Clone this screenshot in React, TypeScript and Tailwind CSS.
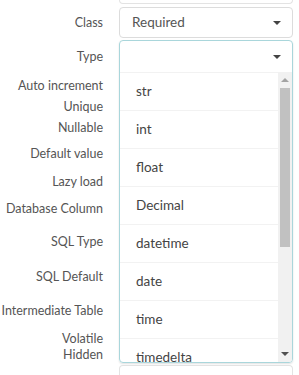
import React from "react";

const labels: { text: string; mt: string }[] = [
  { text: "Class", mt: "mt-[16px]" },
  { text: "Type", mt: "mt-[20px]" },
  { text: "Auto increment", mt: "mt-[15px]" },
  { text: "Unique", mt: "mt-[7px]" },
  { text: "Nullable", mt: "mt-[7px]" },
  { text: "Default value", mt: "mt-[12px]" },
  { text: "Lazy load", mt: "mt-[14px]" },
  { text: "Database Column", mt: "mt-[13px]" },
  { text: "SQL Type", mt: "mt-[19px]" },
  { text: "SQL Default", mt: "mt-[21px]" },
  { text: "Intermediate Table", mt: "mt-[20px]" },
  { text: "Volatile", mt: "mt-[14px]" },
  { text: "Hidden", mt: "mt-[2px]" },
];

const options = ["str", "int", "float", "Decimal", "datetime", "date", "time", "timedelta"];

const Caret = ({ className = "" }: { className?: string }) => (
  <span
    className={`block h-0 w-0 border-x-[4px] border-t-[4px] border-x-transparent border-t-[#444] ${className}`}
  />
);

const App = () => {
  return (
    <div
      className="flex h-[375px] w-[299px] overflow-hidden bg-white text-[#555]"
      style={{ fontFamily: 'Lato, "Liberation Sans", sans-serif' }}
    >
      <div className="flex w-[103px] shrink-0 flex-col items-end text-[12.5px] leading-[14px]">
        {labels.map((l) => (
          <div key={l.text} className={`${l.mt} whitespace-nowrap`}>
            {l.text}
          </div>
        ))}
      </div>

      <div className="ml-[16px] flex w-[174px] shrink-0 flex-col">
        <div className="h-[4px] rounded-b-[4px] border-x border-b border-[#e3e3e3]" />

        <div className="mt-[3px] flex h-[32px] items-center justify-between rounded-[4px] border border-[#dcdcdc] pl-[12px] pr-[11px] text-[13.5px]">
          <span>Required</span>
          <Caret />
        </div>

        <div className="mt-[2px] flex h-[332px] flex-col overflow-hidden rounded-[4px] border border-[#a9d6db] shadow-[0_1px_2px_rgba(0,0,0,0.12)]">
          <div className="flex h-[31px] shrink-0 items-center justify-end pr-[11px]">
            <Caret />
          </div>
          <div className="flex min-h-0 flex-1">
            <div className="flex-1 overflow-hidden">
              {options.map((o) => (
                <div
                  key={o}
                  className="flex h-[38px] items-center border-t border-[#f2f2f2] pl-[16px] text-[13.5px] text-[#444]"
                >
                  {o}
                </div>
              ))}
            </div>
            <div className="flex w-[14px] shrink-0 flex-col items-center bg-[#f1f1f1]">
              <div className="flex h-[16px] items-center justify-center">
                <span className="block h-0 w-0 border-x-[4px] border-b-[4px] border-x-transparent border-b-[#a3a3a3]" />
              </div>
              <div className="h-[159px] w-[10px] bg-[#c1c1c1]" />
              <div className="flex-1" />
              <div className="flex h-[16px] items-center justify-center">
                <Caret className="border-t-[#505050]" />
              </div>
            </div>
          </div>
        </div>

        <div className="mt-[2px] h-[10px] rounded-t-[4px] border-x border-t border-[#e3e3e3]" />
      </div>
    </div>
  );
};

export default App;
